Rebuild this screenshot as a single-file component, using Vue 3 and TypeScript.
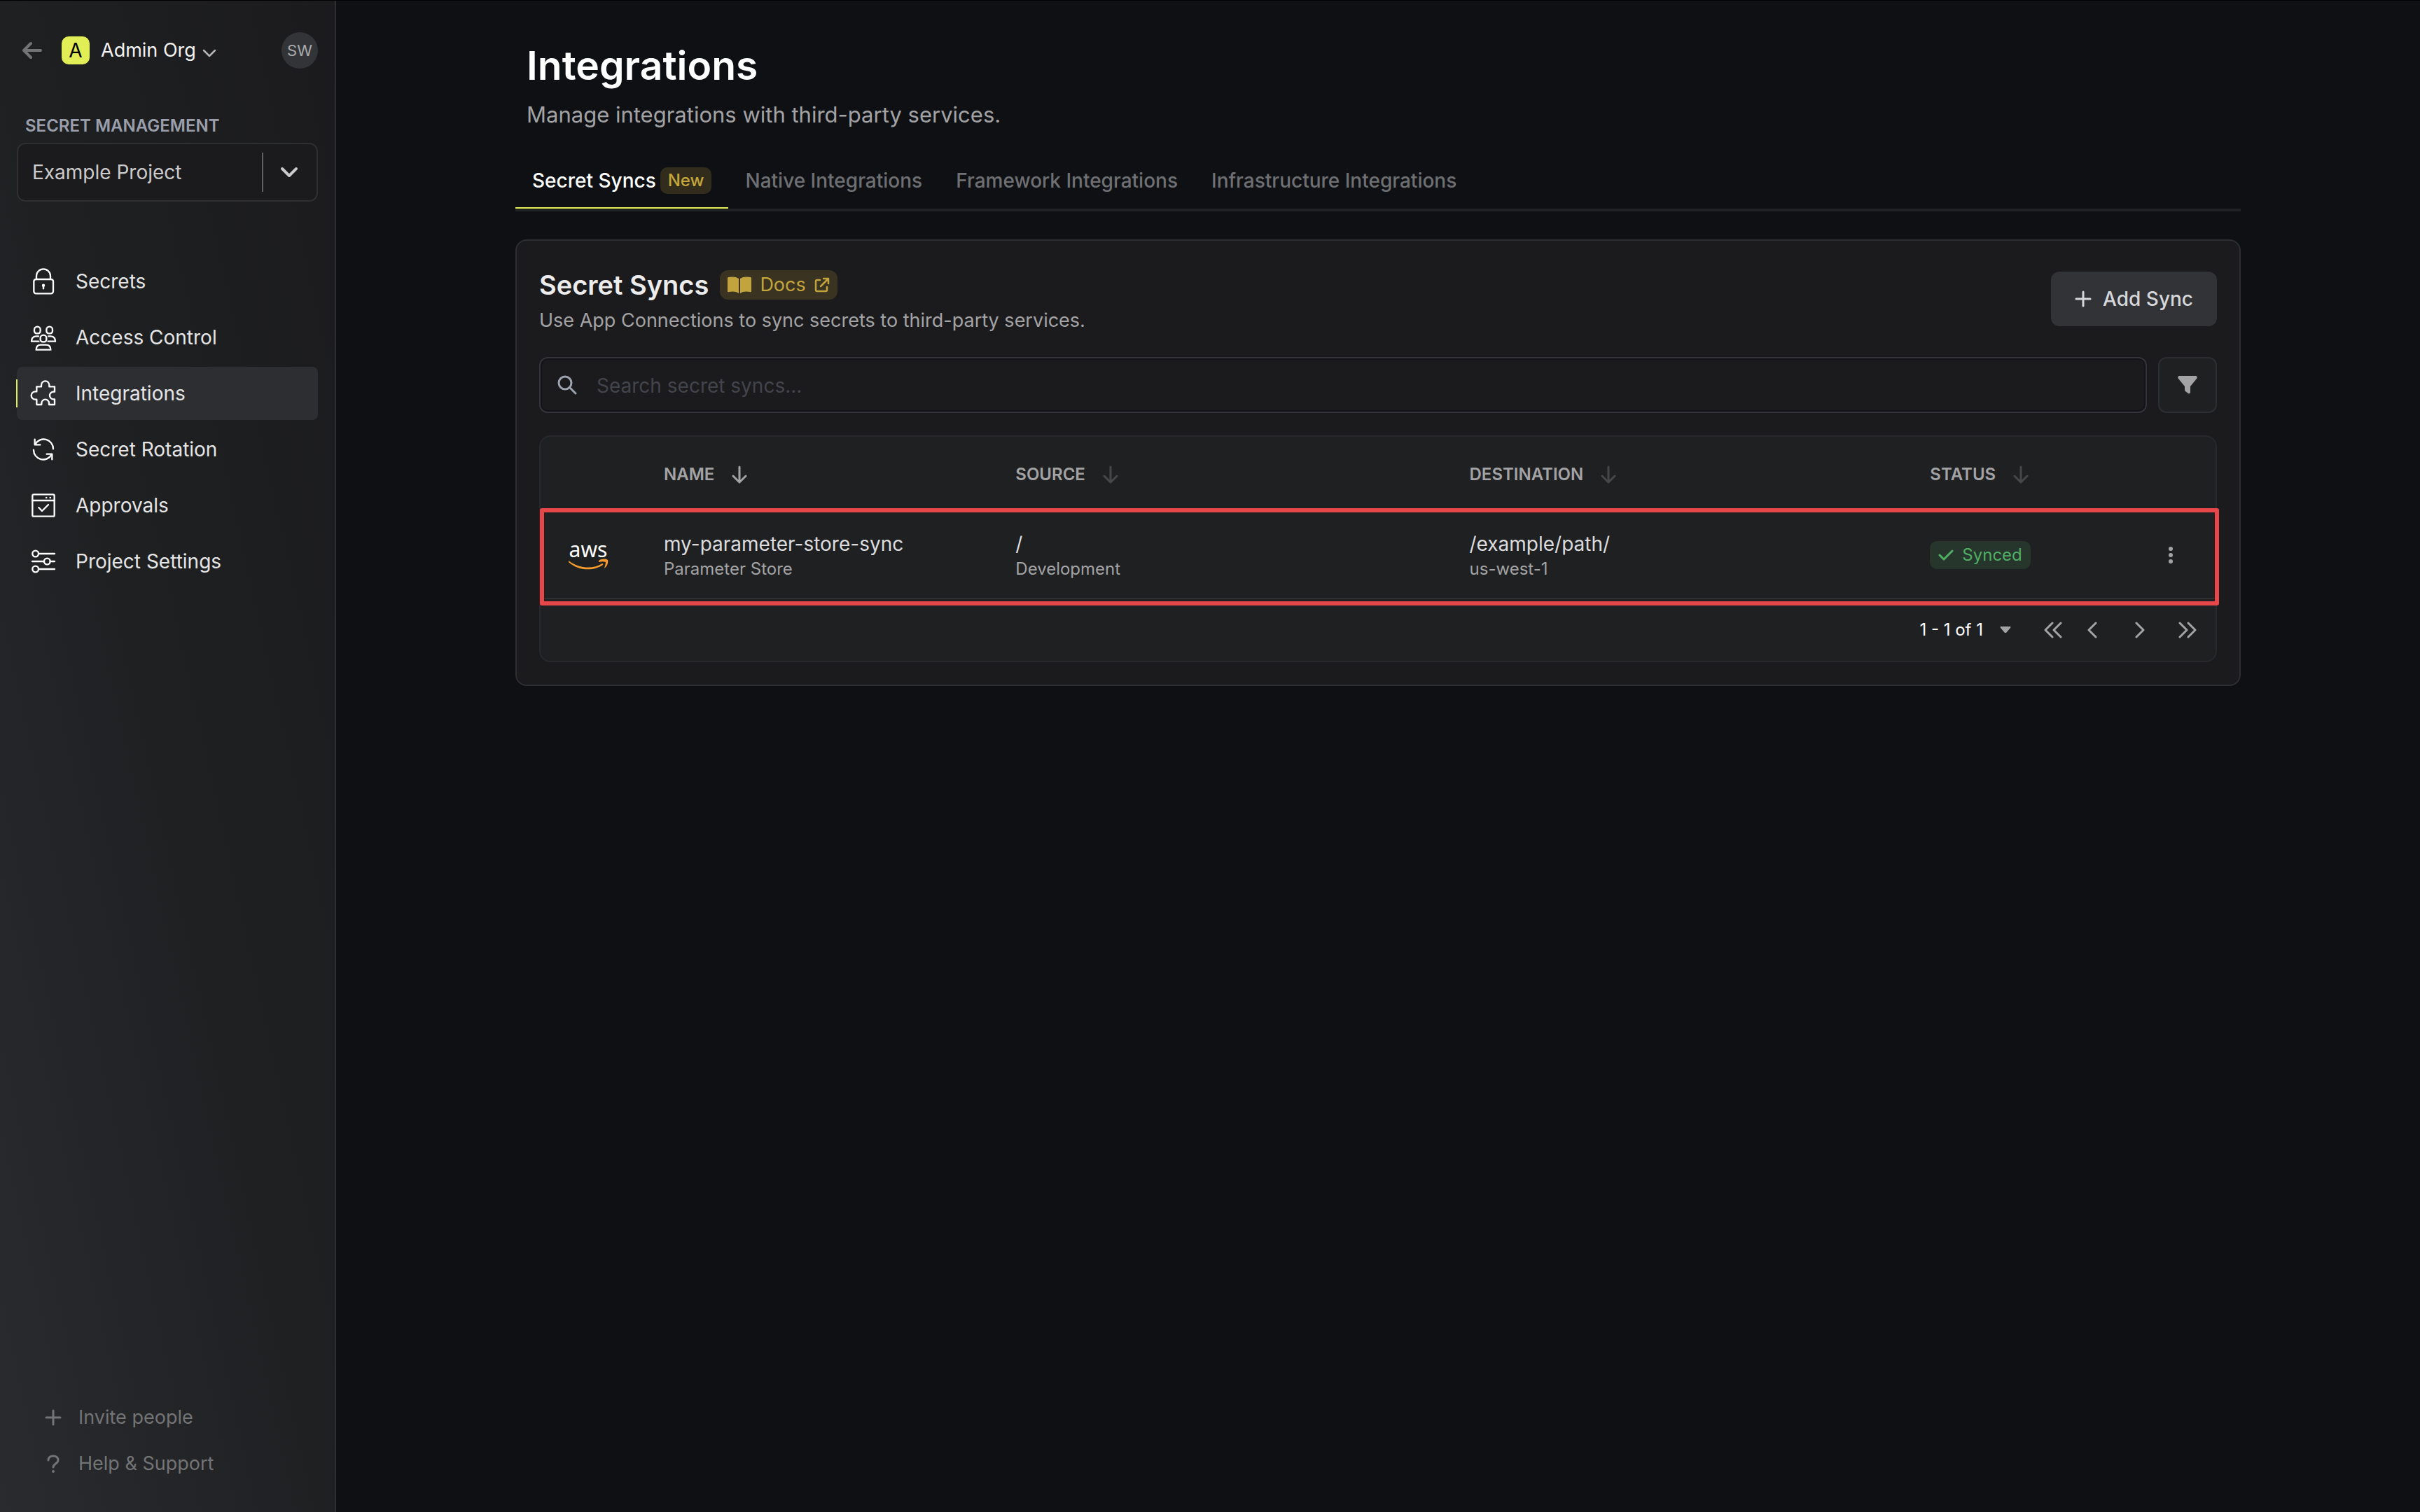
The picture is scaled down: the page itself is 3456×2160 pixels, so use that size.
<script setup lang="ts">
import { ref } from 'vue'

interface NavItem {
  id: string
  label: string
}

interface Column {
  id: string
  label: string
  sorted: boolean
}

interface SecretSync {
  name: string
  service: string
  path: string
  environment: string
  destination: string
  region: string
  status: string
}

const navItems: NavItem[] = [
  { id: 'secrets', label: 'Secrets' },
  { id: 'access', label: 'Access Control' },
  { id: 'integrations', label: 'Integrations' },
  { id: 'rotation', label: 'Secret Rotation' },
  { id: 'approvals', label: 'Approvals' },
  { id: 'settings', label: 'Project Settings' },
]
const activeNav = ref('integrations')

const tabs: string[] = [
  'Secret Syncs',
  'Native Integrations',
  'Framework Integrations',
  'Infrastructure Integrations',
]
const activeTab = ref('Secret Syncs')

const columns: Column[] = [
  { id: 'name', label: 'Name', sorted: true },
  { id: 'source', label: 'Source', sorted: false },
  { id: 'destination', label: 'Destination', sorted: false },
  { id: 'status', label: 'Status', sorted: false },
]

const syncs: SecretSync[] = [
  {
    name: 'my-parameter-store-sync',
    service: 'Parameter Store',
    path: '/',
    environment: 'Development',
    destination: '/example/path/',
    region: 'us-west-1',
    status: 'Synced',
  },
]

const project = ref('Example Project')
const search = ref('')
</script>

<template>
  <div class="shell">
    <aside class="sidebar">
      <header class="org">
        <button class="back" type="button" aria-label="Back">
          <svg width="28" height="28" viewBox="0 0 28 28" class="line w4"><path d="M26 14H3M12 4L2 14l10 10" /></svg>
        </button>
        <button class="org-switch" type="button">
          <span class="org-badge">A</span>
          <span class="org-name">Admin Org</span>
          <svg width="20" height="20" viewBox="0 0 20 20" class="line w2 org-caret"><path d="M2 8l8 8 8-8" /></svg>
        </button>
        <button class="avatar" type="button">SW</button>
      </header>

      <label class="section-label" for="project">SECRET MANAGEMENT</label>
      <div class="project">
        <select id="project" v-model="project">
          <option>Example Project</option>
        </select>
        <span class="project-divider"></span>
        <svg width="26" height="26" viewBox="0 0 26 26" class="line w4"><path d="M3 8l10 10L23 8" /></svg>
      </div>

      <nav class="nav">
        <a
          v-for="item in navItems"
          :key="item.id"
          href="#"
          class="nav-item"
          :class="{ active: item.id === activeNav }"
          @click.prevent="activeNav = item.id"
        >
          <svg class="nav-icon" viewBox="0 0 120 120" width="40" height="40">
            <g v-if="item.id === 'secrets'">
              <rect x="19" y="51" width="83" height="61" rx="9" />
              <path d="M30 51V37a30 30 0 0 1 60 0V51" />
              <circle cx="60" cy="77" r="3" />
              <path d="M60 78v13" />
            </g>
            <g v-else-if="item.id === 'access'">
              <path d="M21 27a13 13 0 0 1 26 0v6a10 10 0 0 1-10 10h-6a10 10 0 0 1-10-10z" />
              <path d="M73 27a13 13 0 0 1 26 0v6a10 10 0 0 1-10 10h-6a10 10 0 0 1-10-10z" />
              <path d="M47 63a13 13 0 0 1 26 0v6a10 10 0 0 1-10 10h-6a10 10 0 0 1-10-10z" />
              <path d="M40 77H9c0-13 7-21 19-22h11" />
              <path d="M80 77h31c0-13-7-21-19-22h-11" />
              <path d="M29 113c0-13 7-21 20-21h22c13 0 20 8 20 21z" />
            </g>
            <g v-else-if="item.id === 'integrations'">
              <path
                d="M31 31H51V24a17 17 0 0 1 34 0V31H108V53h-5a16 16 0 0 0 0 32h5V108H84V102a16 16 0 0 0-32 0V108H31V86h-6a17 17 0 0 1 0-34h6z"
              />
            </g>
            <g v-else-if="item.id === 'rotation'">
              <path d="M25 38A41 41 0 0 1 102 58" />
              <path d="M23 17V40H46" />
              <path d="M18 62A41 41 0 0 0 95 82" />
              <path d="M97 103V80H74" />
            </g>
            <g v-else-if="item.id === 'approvals'">
              <rect x="13" y="13" width="94" height="94" rx="6" />
              <path d="M13 39H107M40 69L54 84 81 57" />
              <path d="M72 27h1M89 27h1" />
            </g>
            <g v-else>
              <circle cx="26" cy="27" r="13" />
              <circle cx="76" cy="60" r="13" />
              <circle cx="26" cy="93" r="13" />
              <path d="M39 27H108M12 60H63M89 60H108M39 93H108" />
            </g>
          </svg>
          <span>{{ item.label }}</span>
        </a>
      </nav>

      <footer class="side-footer">
        <button type="button">
          <svg width="24" height="24" viewBox="0 0 24 24" class="line w3"><path d="M12 2v20M2 12h20" /></svg>
          <span>Invite people</span>
        </button>
        <button type="button">
          <svg width="24" height="26" viewBox="0 0 24 26" class="line w3">
            <path d="M5 8c0-4 3-6 7-6s7 2 7 6c0 5-7 5-7 10" />
            <path d="M12 24v0" class="dot" />
          </svg>
          <span>Help &amp; Support</span>
        </button>
      </footer>
    </aside>

    <main class="main">
      <div class="content">
        <div class="page-head">
          <h1>Integrations</h1>
          <p>Manage integrations with third-party services.</p>
        </div>

        <div class="tabs" role="tablist">
          <button
            v-for="tab in tabs"
            :key="tab"
            type="button"
            role="tab"
            class="tab"
            :class="{ active: tab === activeTab }"
            :aria-selected="tab === activeTab"
            @click="activeTab = tab"
          >
            <span>{{ tab }}</span>
            <span v-if="tab === 'Secret Syncs'" class="new-badge">New</span>
          </button>
        </div>

        <section class="card">
          <div class="card-head">
            <div>
              <div class="card-title">
                <h2>Secret Syncs</h2>
                <a class="docs" href="#">
                  <svg width="34" height="24" viewBox="0 0 34 24" fill="currentColor">
                    <path d="M16 3C12 0 6 0 1 1q-1 0-1 2v18q0 2 2 1c5-1 10-1 14 2z" />
                    <path d="M18 3c4-3 10-3 15-2q1 0 1 2v18q0 2-2 1c-5-1-10-1-14 2z" />
                  </svg>
                  <span>Docs</span>
                  <svg width="22" height="22" viewBox="0 0 22 22" class="line w2">
                    <path d="M8 4H4a2 2 0 0 0-2 2v12a2 2 0 0 0 2 2h12a2 2 0 0 0 2-2v-4M13 2h7v7M19 3L9 13" />
                  </svg>
                </a>
              </div>
              <p class="card-sub">Use App Connections to sync secrets to third-party services.</p>
            </div>
            <button class="add" type="button">
              <svg width="24" height="24" viewBox="0 0 24 24" class="line w3"><path d="M12 2v20M2 12h20" /></svg>
              <span>Add Sync</span>
            </button>
          </div>

          <div class="toolbar">
            <label class="search">
              <svg width="28" height="28" viewBox="0 0 28 28" class="line w3">
                <circle cx="11" cy="11" r="9" />
                <path d="M18 18l8 8" />
              </svg>
              <input v-model="search" type="text" placeholder="Search secret syncs..." aria-label="Search secret syncs" />
            </label>
            <button class="filter" type="button" aria-label="Filter">
              <svg width="28" height="26" viewBox="0 0 28 26" fill="currentColor">
                <path d="M2 0h24q3 1 1 4L18 15v9q-1 2-3 1l-4-3q-1-1-1-2v-5L1 4Q-1 1 2 0z" />
              </svg>
            </button>
          </div>

          <div class="table-box">
            <table>
              <colgroup>
                <col class="col-icon" />
                <col class="col-name" />
                <col class="col-source" />
                <col class="col-destination" />
                <col />
              </colgroup>
              <thead>
                <tr>
                  <td></td>
                  <th v-for="column in columns" :key="column.id" scope="col">
                    <button type="button" class="sort" :class="{ sorted: column.sorted }">
                      <span>{{ column.label }}</span>
                      <svg width="24" height="26" viewBox="0 0 24 26" class="line w3"><path d="M12 2v22M3 15l9 9 9-9" /></svg>
                    </button>
                  </th>
                </tr>
              </thead>
              <tbody>
                <tr v-for="sync in syncs" :key="sync.name">
                  <td class="logo-cell">
                    <svg class="aws" width="58" height="60" viewBox="0 0 58 60">
                      <text x="28" y="33" text-anchor="middle">aws</text>
                      <path d="M0 38c16 12 35 12 48 4q2 0 1 2C36 53 14 53 0 40z" />
                      <path d="M43 38c4-3 10-3 13-1 1 4-1 9-5 12 1-4 2-7 2-9-3-1-6-1-10 0z" />
                    </svg>
                  </td>
                  <td>
                    <p class="primary">{{ sync.name }}</p>
                    <p class="secondary">{{ sync.service }}</p>
                  </td>
                  <td>
                    <p class="primary">{{ sync.path }}</p>
                    <p class="secondary">{{ sync.environment }}</p>
                  </td>
                  <td>
                    <p class="primary">{{ sync.destination }}</p>
                    <p class="secondary">{{ sync.region }}</p>
                  </td>
                  <td>
                    <div class="status-cell">
                      <span class="status">
                        <svg width="22" height="18" viewBox="0 0 22 18" class="line w3"><path d="M2 9l6 6L20 3" /></svg>
                        <span>{{ sync.status }}</span>
                      </span>
                      <button class="more" type="button" aria-label="More actions">
                        <svg width="8" height="26" viewBox="0 0 8 26" fill="currentColor">
                          <circle cx="4" cy="4" r="3" />
                          <circle cx="4" cy="13" r="3" />
                          <circle cx="4" cy="22" r="3" />
                        </svg>
                      </button>
                    </div>
                  </td>
                </tr>
              </tbody>
            </table>

            <div class="pager">
              <button class="range" type="button">
                <span>1 - 1 of 1</span>
                <svg width="16" height="10" viewBox="0 0 16 10" fill="currentColor"><path d="M1 0h14q1 1 0 2L9 9H7L1 2Q0 1 1 0z" /></svg>
              </button>
              <button class="page" type="button" aria-label="First page">
                <svg width="26" height="24" viewBox="0 0 26 24" class="line w3"><path d="M12 2L2 12l10 10M24 2L14 12l10 10" /></svg>
              </button>
              <button class="page" type="button" aria-label="Previous page">
                <svg width="14" height="24" viewBox="0 0 14 24" class="line w3"><path d="M12 2L2 12l10 10" /></svg>
              </button>
              <button class="page spaced" type="button" aria-label="Next page">
                <svg width="14" height="24" viewBox="0 0 14 24" class="line w3"><path d="M2 2l10 10L2 22" /></svg>
              </button>
              <button class="page spaced" type="button" aria-label="Last page">
                <svg width="26" height="24" viewBox="0 0 26 24" class="line w3"><path d="M2 2l10 10L2 22M14 2l10 10-10 10" /></svg>
              </button>
            </div>
          </div>
        </section>
      </div>
    </main>
  </div>
</template>

<style>
html,
body {
  margin: 0;
  background: #0e1014;
}
</style>

<style scoped>
.shell {
  display: flex;
  box-sizing: border-box;
  min-height: 100vh;
  border-top: 1px solid #000;
  background: #0e1014;
  color: #e5e5e6;
  font-family: Inter, "Liberation Sans", sans-serif;
  font-size: 28px;
  line-height: 40px;
}

*,
*::before,
*::after {
  box-sizing: border-box;
}

h1,
h2,
p {
  margin: 0;
}

button {
  margin: 0;
  padding: 0;
  border: 0;
  background: none;
  color: inherit;
  font: inherit;
  cursor: pointer;
}

a {
  color: inherit;
  text-decoration: none;
}

svg {
  display: block;
  flex: none;
}

.line {
  fill: none;
  stroke: currentColor;
  stroke-linecap: round;
  stroke-linejoin: round;
}

.w2 {
  stroke-width: 2.5;
}

.w3 {
  stroke-width: 3;
}

.w4 {
  stroke-width: 4;
}

.dot {
  stroke-width: 4;
}

/* Sidebar */
.sidebar {
  display: flex;
  flex: none;
  flex-direction: column;
  width: 480px;
  padding: 45px 24px 36px;
  border-right: 2px solid #2d2e31;
  background: linear-gradient(to top right, #2a2b2e, #1f2022 50%, #1b1b1d);
}

.org {
  display: flex;
  align-items: center;
  height: 52px;
  padding-left: 8px;
}

.back {
  color: #737476;
}

.org-switch {
  display: flex;
  align-items: center;
  margin-left: 28px;
}

.org-badge {
  width: 40px;
  height: 40px;
  margin-right: 16px;
  border-radius: 10px;
  background: #e1ee56;
  color: #000;
  text-align: center;
}

.org-name {
  color: #f2f2f2;
  font-size: 27px;
}

.org-caret {
  margin: 4px 0 0 9px;
  color: #b4b4b6;
}

.avatar {
  width: 52px;
  height: 52px;
  margin-left: auto;
  border-radius: 50%;
  background: #333438;
  color: #a9aaac;
  font-size: 22px;
}

.section-label {
  margin: 62px 0 4px 12px;
  color: #9a9fab;
  font-size: 24px;
  font-weight: 600;
  line-height: 40px;
}

.project {
  display: flex;
  align-items: center;
  height: 84px;
  padding: 0 26px 0 20px;
  border: 2px solid #2d2f31;
  border-radius: 12px;
  background: #1b1b1d;
  color: #cbcbcc;
}

.project select {
  flex: 1;
  min-width: 0;
  padding: 0;
  border: 0;
  appearance: none;
  background: transparent;
  color: inherit;
  font: inherit;
}

.project-divider {
  width: 2px;
  height: 56px;
  margin-right: 24px;
  background: #616163;
}

.nav {
  display: flex;
  flex-direction: column;
  gap: 4px;
  margin-top: 76px;
}

.nav-item {
  position: relative;
  display: flex;
  align-items: center;
  gap: 26px;
  height: 76px;
  padding-left: 18px;
  border-radius: 8px;
}

.nav-item.active {
  background: #2d2e32;
}

.nav-item.active::before {
  content: "";
  position: absolute;
  top: 18px;
  left: -1px;
  width: 2px;
  height: 40px;
  background: #e1ee56;
}

.nav-icon {
  fill: none;
  stroke: #fff;
  stroke-linecap: round;
  stroke-linejoin: round;
  stroke-width: 7;
}

.side-footer {
  display: flex;
  flex-direction: column;
  align-items: flex-start;
  margin-top: auto;
  padding-left: 40px;
  color: #737476;
  font-size: 27px;
}

.side-footer button {
  display: flex;
  align-items: center;
  gap: 24px;
  height: 66px;
}

/* Main column */
.main {
  flex: 1;
  min-width: 0;
  padding: 57px 48px 48px;
}

.content {
  max-width: 2464px;
  margin: 0 auto;
}

.page-head {
  padding-left: 16px;
}

h1 {
  color: #fff;
  font-size: 57px;
  font-weight: 600;
  line-height: 72px;
}

.page-head p {
  margin-top: 10px;
  color: #a3a3a5;
  font-size: 31px;
  line-height: 48px;
}

.tabs {
  display: flex;
  margin-top: 30px;
  border-bottom: 4px solid #202123;
}

.tab {
  display: flex;
  align-items: center;
  gap: 6px;
  height: 80px;
  padding: 2px 24px 0;
  border-bottom: 2px solid transparent;
  color: #6f7073;
  font-weight: 500;
}

.tab.active {
  border-bottom-color: #e1ee56;
  color: #fff;
}

.new-badge {
  height: 38px;
  padding: 0 11px;
  border-radius: 10px;
  background: #312c1c;
  color: #c5a63a;
  font-size: 24px;
  line-height: 38px;
}

.card {
  margin-top: 40px;
  padding: 32px;
  border: 2px solid #2d2e31;
  border-radius: 16px;
  background: #1b1b1d;
}

.card-head {
  display: flex;
  align-items: center;
  justify-content: space-between;
}

.card-title {
  display: flex;
  align-items: center;
  gap: 16px;
  height: 62px;
}

h2 {
  color: #ececec;
  font-size: 38px;
  font-weight: 600;
  line-height: 56px;
}

.docs {
  display: flex;
  align-items: center;
  gap: 12px;
  height: 42px;
  padding: 0 11px;
  border-radius: 12px;
  background: #3a3321;
  color: #c3a43c;
  font-size: 27px;
}

.card-sub {
  color: #a3a3a5;
  font-size: 27px;
}

.add {
  display: flex;
  align-items: center;
  gap: 16px;
  height: 78px;
  padding: 0 34px;
  border-radius: 12px;
  background: #323337;
  color: #d6d7da;
  font-weight: 500;
}

.toolbar {
  display: flex;
  gap: 16px;
  margin-top: 32px;
}

.search {
  display: flex;
  flex: 1;
  align-items: center;
  gap: 28px;
  height: 80px;
  padding: 0 24px;
  border: 2px solid #33343a;
  border-radius: 12px;
  box-shadow: inset 0 0 0 2px #121218;
  color: #9ca3af;
}

.search input {
  flex: 1;
  min-width: 0;
  padding: 2px 0 0;
  border: 0;
  outline: 0;
  background: transparent;
  color: #e5e5e6;
  font: inherit;
}

.search input::placeholder {
  color: #43444c;
  opacity: 1;
}

.filter {
  display: flex;
  align-items: center;
  justify-content: center;
  width: 84px;
  height: 80px;
  border: 2px solid #2d2e31;
  border-radius: 12px;
  background: #1f2022;
  color: #a3a3a5;
}

/* Table */
.table-box {
  margin-top: 32px;
  border: 2px solid #28292c;
  border-radius: 16px;
  background: #1f2022;
}

table {
  width: 100%;
  table-layout: fixed;
  border-collapse: separate;
  border-spacing: 0;
}

.col-icon {
  width: 136px;
}

.col-name {
  width: 21%;
}

.col-source {
  width: 27.1%;
}

.col-destination {
  width: 27.5%;
}

th,
td {
  padding: 2px 40px 0;
  text-align: left;
  vertical-align: middle;
}

.logo-cell {
  padding-right: 0;
}

thead tr {
  height: 106px;
}

tbody tr {
  position: relative;
  height: 126px;
}

tbody td {
  border-bottom: 2px solid #2d2f33;
}

/* Highlight frame around the row */
.logo-cell::after {
  content: "";
  position: absolute;
  top: -4px;
  right: -5px;
  bottom: -9px;
  left: -1px;
  border: 6px solid #e8474a;
  border-radius: 3px;
  pointer-events: none;
}

.sort {
  display: flex;
  align-items: center;
  gap: 24px;
  color: #a3a3a5;
  font-size: 24px;
  font-weight: 600;
  text-transform: uppercase;
}

.sort svg {
  opacity: 0.3;
}

.sort.sorted svg {
  opacity: 1;
}

.aws text {
  fill: #fff;
  font-family: "Noto Sans", sans-serif;
  font-size: 30px;
}

.aws path {
  fill: #f79a2e;
}

.primary {
  color: #dcdcde;
}

.secondary {
  color: #a3a3a5;
  font-size: 24px;
  line-height: 32px;
}

.status-cell {
  display: flex;
  align-items: center;
  justify-content: space-between;
}

.status {
  display: flex;
  align-items: center;
  gap: 12px;
  height: 40px;
  padding: 0 12px;
  border-radius: 10px;
  background: #26362c;
  color: #50ae65;
  font-size: 24px;
}

.more {
  display: flex;
  justify-content: center;
  width: 48px;
  color: #a3a3a5;
}

.pager {
  display: flex;
  align-items: center;
  justify-content: flex-end;
  height: 88px;
  padding-right: 12px;
  color: #a3a3a5;
}

.range {
  display: flex;
  align-items: center;
  gap: 24px;
  padding-right: 32px;
  font-size: 24px;
}

.range span {
  color: #fff;
}

.page {
  display: flex;
  justify-content: center;
  width: 56px;
}

.page.spaced {
  margin-left: 12px;
}
</style>
